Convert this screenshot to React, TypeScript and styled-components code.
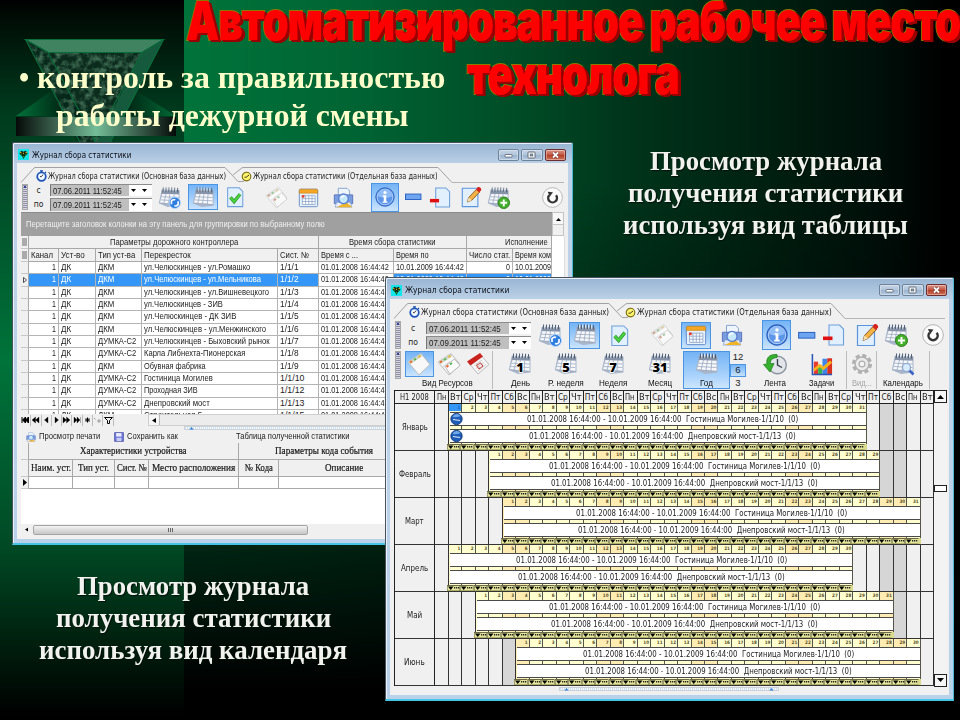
import React, { useLayoutEffect, useRef, useState } from "react";
import styled, { createGlobalStyle, css } from "styled-components";

const Global = createGlobalStyle`
  * { box-sizing: border-box; }
  body { margin: 0; background: #000; overflow: hidden; }
  svg { display: block; flex: none; overflow: visible; }
`;

const sans = '"Liberation Sans", Arial, sans-serif';
const tahoma = '"DejaVu Sans Condensed", "DejaVu Sans", sans-serif';
const serif = '"Liberation Serif", "Times New Roman", serif';

/* ---------- text fitted to a given width ---------- */

const FitBox = styled.span<{ $w: number; $ml: number }>`
  display: inline-block;
  flex: none;
  width: ${(p) => p.$w}px;
  margin-left: ${(p) => p.$ml}px;
  white-space: pre;
`;
const FitInner = styled.span`
  display: inline-block;
  transform-origin: 0 50%;
`;

function Fit({ w, ml = 0, children }: { w: number; ml?: number; children: React.ReactNode }) {
  const ref = useRef<HTMLSpanElement>(null);
  const [k, setK] = useState(1);
  useLayoutEffect(() => {
    if (ref.current) setK(w / ref.current.offsetWidth);
  }, [w, children]);
  return (
    <FitBox $w={w} $ml={ml}>
      <FitInner ref={ref} style={{ transform: `scaleX(${k})` }}>
        {children}
      </FitInner>
    </FitBox>
  );
}

/* ---------- slide ---------- */

const Slide = styled.main`
  position: relative;
  width: 960px;
  height: 720px;
  overflow: hidden;
  display: grid;
  grid-template-columns: 184px 1fr;
`;
const LeftBand = styled.div`
  background: linear-gradient(#000 0, #000a04 14px, #003a1d 110px, #00733a 360px, #004a25 545px, #001c0c 650px, #000 715px);
`;
const RightBand = styled.div`
  background:
    linear-gradient(transparent 180px, rgba(0, 0, 0, 0.68) 545px, #000 690px),
    linear-gradient(90deg, #00733a 0, #006634 150px, #004d27 330px, #00351b 440px, #001f10 590px, #00100a 690px, #000 760px);
`;
const Placed = styled.div<{ $x: number; $y: number }>`
  position: absolute;
  left: ${(p) => p.$x}px;
  top: ${(p) => p.$y}px;
`;
const Headline = styled(Placed)`
  margin: 0;
  font: 900 54px/54px Inter, Roboto, sans-serif;
  letter-spacing: -1.5px;
  color: #f00;
  -webkit-text-stroke: 2px #8b7a00;
  paint-order: stroke fill;
  text-shadow: 2px 1px 0 #990000, 3px 2px 0 #990000, 4px 2px 0 #990000;
`;
const HeadLine = styled.div<{ $ml?: number }>`
  height: 54px;
  padding-left: ${(p) => p.$ml || 0}px;
`;
const Bullet = styled(Placed)`
  font: bold 32px/38px ${serif};
  color: #ffffcc;
`;
const BulletLine = styled.div<{ $ml: number }>`
  height: 38px;
  padding-left: ${(p) => p.$ml}px;
`;
const Caption = styled(Placed)`
  display: flex;
  flex-direction: column;
  align-items: center;
  font: bold 27px/32px ${serif};
  color: #f2f2ee;
  text-shadow: 1px 1px 1px #00130a;
`;

function Emblem() {
  return (
    <svg width="184" height="150" viewBox="0 0 184 150">
      <defs>
        <linearGradient id="bar">
          <stop offset="0" stopColor="#050a08" />
          <stop offset=".5" stopColor="#74bd98" />
          <stop offset="1" stopColor="#050a08" />
        </linearGradient>
        <linearGradient id="wingL">
          <stop offset="0" stopColor="#00733a" />
          <stop offset="1" stopColor="#001a0e" />
        </linearGradient>
        <linearGradient id="wingR">
          <stop offset="0" stopColor="#001a0e" />
          <stop offset="1" stopColor="#006a36" />
        </linearGradient>
        <filter id="marble" x="0" y="0" width="1" height="1" colorInterpolationFilters="sRGB">
          <feTurbulence type="fractalNoise" baseFrequency=".16" numOctaves="5" seed="11" />
          <feColorMatrix values="0 0 0 0 .28  0 0 0 0 .46  0 0 0 0 .36  2.2 0 0 0 -.85" />
          <feComposite in2="SourceGraphic" operator="in" result="n" />
          <feMerge>
            <feMergeNode in="SourceGraphic" />
            <feMergeNode in="n" />
          </feMerge>
        </filter>
      </defs>
      <path d="M16 116L50 92 70 116z" fill="url(#wingL)" />
      <path d="M176 116L138 92 118 116z" fill="url(#wingR)" />
      <g filter="url(#marble)">
        <path d="M25 39L48 52 97 142 97 150 82 150z" fill="#06281a" />
        <path d="M48 52H142L97 146z" fill="#0b2c1d" />
      </g>
      <path d="M164 39L142 52 97 142V150h10z" fill="#155a3c" />
      <path d="M25 39H164L142 52H48z" fill="#3f8360" />
      <path d="M25.500 39.500H163.500L142 52.500H48zL84 150M163.500 39.500L106 150M48 52.500L100 150M142 52.500L94 142" fill="none" stroke="#0a6b3b" strokeWidth="1.200" />
      <rect x="16" y="117" width="160" height="19" fill="url(#bar)" />
    </svg>
  );
}

/* ---------- window chrome ---------- */

const Frame = styled.section<{ $x: number; $y: number; $w: number; $h: number; $top: number }>`
  position: absolute;
  left: ${(p) => p.$x}px;
  top: ${(p) => p.$y}px;
  width: ${(p) => p.$w}px;
  height: ${(p) => p.$h}px;
  display: flex;
  flex-direction: column;
  border: 1px solid #47525c;
  border-right-color: #4bb9d6;
  border-bottom: 2px solid #45c4e6;
  border-radius: 2px 2px 0 0;
  box-shadow: inset 1px 1px 0 #e9f2fa;
  padding: 0 4px 4px 4px;
  background: linear-gradient(#98b4d2 0, #bdd2e8 ${(p) => p.$top}px, #b9d1ea 100%);
`;
const TitleBar = styled.header<{ $h: number }>`
  height: ${(p) => p.$h}px;
  flex: none;
  display: flex;
  align-items: center;
  font: 8.600px/12px ${tahoma};
  color: #0a0f18;
  padding: 3px 2px 0 1px;
`;
const Spacer = styled.div`
  flex: 1;
`;
const WinButton = styled.div<{ $close?: boolean }>`
  width: 21.500px;
  height: 12px;
  margin-left: 2px;
  border: 1px solid ${(p) => (p.$close ? "#6e2c2c" : "#6d829b")};
  border-radius: 2px;
  box-shadow: inset 0 0 0 1px rgba(255, 255, 255, 0.35);
  background: ${(p) =>
    p.$close
      ? "linear-gradient(#d99a8c, #c4513c 50%, #b03c26 50%, #cf7358)"
      : "linear-gradient(#c3d3e5, #b2c5db 50%, #9cb3cd 50%, #b3c9e0)"};
  display: flex;
  align-items: center;
  justify-content: center;
`;
const Client = styled.div`
  flex: 1;
  min-height: 0;
  background: #f0f0f0;
  display: flex;
  flex-direction: column;
  overflow: hidden;
  font: 8.800px/11px ${sans};
  color: #1c1c1c;
`;

function AppGlyph() {
  return (
    <svg width="11" height="11" viewBox="0 0 12 12">
      <rect width="12" height="12" fill="#12e6ea" />
      <path d="M1.500 4.500l2-2.500 2.500 1 2.500-1 2 2.500-1.500 2-1.500 1.500L6 11 4.500 8 3 6.500z" fill="#101c14" />
      <path d="M2.500 3.500l1.200 1M9.500 3.500l-1.200 1M5.500 4.500l1 .5" stroke="#e8d21a" strokeWidth="1.300" />
      <path d="M5.500 7.500l1 1.500M3.500 6l1 .5M8.500 6l-1 .5" stroke="#17a832" strokeWidth="1.500" />
    </svg>
  );
}
const WinGlyph = ({ kind }: { kind: "min" | "max" | "close" }) => (
  <svg width="9" height="8" viewBox="0 0 9 8">
    {kind === "min" && <rect x="1" y="3.500" width="7" height="2.600" rx=".5" fill="#fff" stroke="#55606e" strokeWidth=".8" />}
    {kind === "max" && (
      <>
        <rect x="1" y="1" width="7" height="6" rx=".6" fill="#fff" stroke="#55606e" strokeWidth=".9" />
        <rect x="3.200" y="3" width="2.600" height="2" fill="#8fa6c0" stroke="#55606e" strokeWidth=".7" />
      </>
    )}
    {kind === "close" && (
      <>
        <path d="M2 1.500l5 5M7 1.500l-5 5" stroke="#5c2a2a" strokeWidth="3" />
        <path d="M2 1.500l5 5M7 1.500l-5 5" stroke="#fff" strokeWidth="1.800" />
      </>
    )}
  </svg>
);

function WindowTitle({ h, w }: { h: number; w: number }) {
  return (
    <TitleBar $h={h}>
      <AppGlyph />
      <Fit w={w} ml={3}>Журнал сбора статистики</Fit>
      <Spacer />
      <WinButton><WinGlyph kind="min" /></WinButton>
      <WinButton><WinGlyph kind="max" /></WinButton>
      <WinButton $close><WinGlyph kind="close" /></WinButton>
    </TitleBar>
  );
}

/* ---------- tabs ---------- */

const Tabs = styled.nav`
  height: 20px;
  flex: none;
  padding-top: 4px;
  display: flex;
`;
const TabBody = styled.div<{ $w: number; $in: number }>`
  width: ${(p) => p.$w}px;
  height: 16px;
  border-top: 1px solid #a2a2a2;
  display: flex;
  align-items: center;
  font: 8.600px/12px ${tahoma};
  padding-left: ${(p) => p.$in}px;
`;
const TabRest = styled.div`
  flex: 1;
  border-bottom: 1px solid #b5b5b5;
  margin-right: 4px;
`;
const Pull = styled.div`
  margin-left: -3px;
  display: flex;
`;
const Slope = ({ w, d }: { w: number; d: string }) => (
  <svg width={w} height="16" viewBox={`0 0 ${w} 16`}>
    <path d={d} fill="none" stroke="#a2a2a2" />
  </svg>
);
const Clock = ({ blue }: { blue?: boolean }) => (
  <svg width="11" height="12" viewBox="0 0 11 12">
    {blue && <path d="M4 .8h3M5.500 1v2M9 2l1 1" stroke="#1d4fa6" strokeWidth="1.200" />}
    <circle cx="5.500" cy="6.600" r="4.300" fill={blue ? "#f3f8ff" : "#fff36b"} stroke={blue ? "#1b54b8" : "#756a12"} strokeWidth={blue ? 1.700 : 1.100} />
    <path d={blue ? "M5.500 6.600l1.500-2M5.500 6.600H4" : "M8 5L5.500 7 3.500 7.300"} stroke="#222" fill="none" strokeWidth=".9" />
  </svg>
);

function TabStrip({ t1, t2, b1, b2 }: { t1: number; t2: number; b1: number; b2: number }) {
  return (
    <Tabs>
      <Slope w={18} d="M4 15.500L17 1 18 .5" />
      <TabBody $w={b1} $in={1}>
        <Clock blue />
        <Fit w={t1} ml={1}>Журнал сбора статистики (Основная база данных)</Fit>
      </TabBody>
      <Slope w={13} d="M0 .5L13 14.500H19" />
      <Slope w={6} d="M-5 8L4 .8 6 .5" />
      <TabBody $w={b2} $in={0}>
        <Pull><Clock /></Pull>
        <Fit w={t2} ml={1}>Журнал сбора статистики (Отдельная база данных)</Fit>
      </TabBody>
      <Slope w={14} d="M0 .5L14 15.500" />
      <TabRest />
    </Tabs>
  );
}

/* ---------- icons ---------- */

type IconName =
  | "calRefresh" | "cal" | "calPlus" | "calFind" | "check" | "cards" | "sheet" | "print" | "info"
  | "minus" | "docMinus" | "edit" | "reload" | "blank" | "red" | "tape" | "tasks" | "gear"
  | "n1" | "n5" | "n7" | "n31" | "save" | "printSmall";

const NumberMark = styled.text`
  font: 900 13px "Open Sans", ${tahoma};
`;

function CalBase() {
  return (
    <>
      <path d="M4 3.500L22.500 4.500 22.500 20.500 10 22 .8 18z" fill="#a9b5c8" />
      <path d="M4.500 8L21.500 8.500V19L2 17.500z" fill="#f6f8fc" />
      <path d="M4 4L22 4.500V8.500L3.600 8z" fill="#8693a8" />
      <path d="M3.600 11.200l18 .8M2.800 14.500l18.500 1M8.500 8L6 18M12.500 8l-1.500 10.500M16.800 8.500L16 19M2 17.800l19.500 1.600" stroke="#9aa8be" strokeWidth=".8" fill="none" />
      <path d="M5.500 1.500v4.500M8.500 1.500v4.500M11.500 1.500v4.500M14.500 1.500v4.500M17.500 1.800v4.500M20.500 2v4.500" stroke="#566275" strokeWidth="1" />
      <path d="M6.500 1.500v4M9.500 1.500v4M12.500 1.500v4M15.500 1.500v4M18.500 1.800v4" stroke="#dfe6ef" strokeWidth=".9" />
    </>
  );
}
const Page = () => <path d="M4 2h12.500l4 4v16.500H4z" fill="#e2effd" stroke="#6d9fdc" strokeWidth="1.100" />;

function Icon({ name, size = 24 }: { name: IconName; size?: number }) {
  const num = { n1: "1", n5: "5", n7: "7", n31: "31" }[name as "n1"];
  return (
    <svg width={size} height={size} viewBox="0 0 24 24">
      {(name.startsWith("cal") || num) && <CalBase />}
      {num && (
        <NumberMark x="12" y="20" textAnchor="middle" stroke="#fff" strokeWidth="1.500" paintOrder="stroke">
          {num}
        </NumberMark>
      )}
      {name === "calRefresh" && (
        <>
          <circle cx="17.500" cy="17.500" r="6" fill="#2f7fe0" stroke="#bcd9fa" />
          <path d="M14 19v-3.500c2-2 4-1 4-1M21 16v3.500c-2 2-4 1-4 1" stroke="#fff" strokeWidth="1.700" fill="none" />
        </>
      )}
      {name === "calPlus" && (
        <>
          <circle cx="17.500" cy="17.500" r="6" fill="#45b02c" stroke="#2c7d1b" />
          <path d="M17.500 14v7M14 17.500h7" stroke="#fff" strokeWidth="2" />
        </>
      )}
      {name === "calFind" && (
        <>
          <path d="M18 18l4.500 4.500" stroke="#3d63c9" strokeWidth="2.600" />
          <circle cx="15.500" cy="15.500" r="4" fill="#d7ecff" stroke="#8ca4cc" strokeWidth="1.200" />
        </>
      )}
      {name === "check" && (
        <>
          <Page />
          <path d="M7 12.500l4 4.500 6.500-8" stroke="#1e8f25" strokeWidth="3.600" fill="none" />
          <path d="M7 12.500l4 4.500 6.500-8" stroke="#4ed33e" strokeWidth="2.200" fill="none" />
        </>
      )}
      {name === "docMinus" && (
        <>
          <path d="M7 2h10.500l4 4v16H7z" fill="#e2effd" stroke="#6d9fdc" strokeWidth="1.100" />
          <rect x="1" y="13.500" width="9.500" height="3.600" fill="#e01010" />
        </>
      )}
      {name === "edit" && (
        <>
          <path d="M2.500 2.500h17v20h-17z" fill="#e2effd" stroke="#5b95e0" strokeWidth="1.200" />
          <path d="M8 17.500l1.500-5L18 3.500l3.500 3L13 15.500z" fill="#f3b245" stroke="#80501a" strokeWidth=".9" />
          <path d="M8 17.500l1.500-5 3.500 3z" fill="#f6dfb2" />
          <path d="M17.500 4l3.500 3 2-2.500c1-2-2.500-4.500-4-3z" fill="#d8231c" />
        </>
      )}
      {(name === "cards" || name === "blank") && (
        <>
          <path d="M1 10L14 1.500l9 11L12 23z" fill="#f8f8f8" stroke="#b5b5b5" strokeWidth=".9" />
          <path d="M1 10L14 1.500l1.800 2.200L3 12.500z" fill="#cfd6c8" />
          <path d="M3 10.500l2-1.300" stroke="#ed6a2e" strokeWidth="2" />
          <path d="M7 8l2-1.300" stroke="#5bb85b" strokeWidth="2" />
          <path d="M11.500 5.200l2-1.300" stroke="#e8b83a" strokeWidth="2" />
        </>
      )}
      {name === "cards" && (
        <>
          <path d="M8 14.500L17.500 7l5.500 6.500L13 22z" fill="#fdfdfd" stroke="#b0b0b0" strokeWidth=".9" />
          <path d="M9.500 15l2-1.500" stroke="#ed6a2e" strokeWidth="2" />
          <path d="M13 12.500l2-1.500" stroke="#5bb85b" strokeWidth="2" />
          <path d="M6 15l7-5.500" stroke="#ccc" />
        </>
      )}
      {name === "red" && (
        <>
          <path d="M2 10L14 2l9 10.500L12 22z" fill="#f6f6f6" stroke="#b5b5b5" strokeWidth=".9" />
          <path d="M1 9.500L14 1l3 3.500L4.500 13.500z" fill="#c9231c" />
          <path d="M8 14l8-6M10 16.500l8-6M12 19l8-6.500M10 11l4.500 6M13 9l4.500 6" stroke="#c4c4c4" strokeWidth=".8" />
          <path d="M10.500 13.500l4-2.500 2.500 3-4 3z" fill="none" stroke="#c9231c" strokeWidth=".9" />
        </>
      )}
      {name === "sheet" && (
        <>
          <rect x="1.500" y="2.500" width="21" height="20" rx="1.500" fill="#e7f1fc" stroke="#5f88c4" />
          <path d="M1.500 7V4q0-1.500 1.500-1.500h18q1.500 0 1.500 1.500v3z" fill="#f5a623" stroke="#c07d18" strokeWidth=".6" />
          <path d="M5 10h14.500v10H5zM5 13.300h14.500M5 16.600h14.500M8.700 10v10M12.300 10v10M16 10v10" fill="#fff" stroke="#8ba3c7" strokeWidth=".9" />
          <rect x="4.300" y="9.300" width="3" height="2.800" fill="#e63a2a" />
        </>
      )}
      {(name === "print" || name === "printSmall") && (
        <>
          <path d="M6 1.500h10l3 3V10H6z" fill="#eef5fd" stroke="#7d9cc9" />
          <path d="M1.500 9h21v10h-21z" fill="#7a9ce0" stroke="#5470b8" />
          <path d="M4 17.500h16l1.500 5.500h-19z" fill="#e8eefc" stroke="#7d9cc9" strokeWidth=".8" />
          <path d="M16 18l6 5h-18l6-3z" fill="#f0b428" />
          <circle cx="12" cy="13.500" r="5.500" fill="#c5e8fb" stroke="#5c7fd0" strokeWidth="1.500" />
          <path d="M9 12.500q1.500-2.500 4-2" stroke="#fff" strokeWidth="1.500" fill="none" />
        </>
      )}
      {name === "info" && (
        <>
          <circle cx="12" cy="12" r="11" fill="#5d95e8" stroke="#2a5dbb" strokeWidth="1.200" />
          <circle cx="12" cy="12" r="9.400" fill="none" stroke="#b9d6fb" strokeWidth="1" />
          <path d="M3.500 11a8.500 8.500 0 0 1 17 0q-8 4-17 0z" fill="#8fbcf6" />
          <circle cx="12" cy="6.600" r="1.900" fill="#fff" />
          <path d="M9.300 10h4.200v7.300h1.500v1.700H9v-1.700h1.500v-5.600H9.300z" fill="#fff" />
        </>
      )}
      {name === "minus" && <rect x="3" y="8.500" width="18.500" height="6.500" fill="#6ea5f0" stroke="#2f64c4" strokeWidth="1.200" />}
      {name === "reload" && (
        <>
          <circle cx="12" cy="12" r="11.300" fill="#fafafa" stroke="#a8a8a8" strokeWidth=".9" />
          <path d="M8.200 9.500a5 5 0 1 0 7.800 0" fill="none" stroke="#333" strokeWidth="2.700" />
          <path d="M6.500 5.500l6 .6-3.600 5z" fill="#333" />
        </>
      )}
      {name === "tape" && (
        <>
          <circle cx="14.500" cy="13" r="8.800" fill="#e2e6ea" stroke="#8d959e" strokeWidth="1.400" />
          <path d="M14.500 7v6l4.500 2.500" stroke="#394049" strokeWidth="1.400" fill="none" />
          <path d="M14 2.500C6 2 3 6 4 12l-3.500.5L7 20l4-8.500-3.500.3C7 8 9 6 14 5.500z" fill="#36b02e" stroke="#1e7f1c" strokeWidth=".8" />
        </>
      )}
      {name === "tasks" && (
        <>
          <rect x="4" y="9" width="4.500" height="13" fill="#e83b2e" />
          <rect x="8.500" y="14" width="4.500" height="8" fill="#34b44a" />
          <rect x="13" y="6" width="5" height="16" fill="#3f86e8" />
          <rect x="18" y="5.500" width="5" height="16.500" fill="#d9301f" />
          <path d="M4 18l6-5 4 3 8-7" stroke="#f6b51e" strokeWidth="3" fill="none" />
          <path d="M2.500 1v21.500H23" stroke="#2a56b8" strokeWidth="1.600" fill="none" />
        </>
      )}
      {name === "gear" && (
        <>
          <circle cx="12" cy="12" r="9.300" fill="none" stroke="#b0b0b0" strokeWidth="3.400" strokeDasharray="4.400 2.900" />
          <circle cx="12" cy="12" r="7.600" fill="#ebebeb" stroke="#b0b0b0" strokeWidth="1.600" />
          <circle cx="12" cy="12" r="3.200" fill="#f4f4f4" stroke="#b0b0b0" strokeWidth="1.400" />
        </>
      )}
      {name === "save" && (
        <>
          <path d="M1.500 1.500h21v21h-21z" fill="#6f78dd" stroke="#3f479e" strokeWidth="1.800" />
          <rect x="5" y="2.500" width="13" height="8.500" fill="#e9ebfb" />
          <rect x="6" y="14" width="12" height="8" fill="#c9ccf2" />
        </>
      )}
    </svg>
  );
}

/* ---------- toolbars ---------- */

const Toolbar = styled.div<{ $h: number }>`
  height: ${(p) => p.$h}px;
  flex: none;
  display: flex;
  align-items: center;
`;
const Grip = styled.div<{ $ml: number; $h: number }>`
  width: 6px;
  height: ${(p) => p.$h}px;
  margin-left: ${(p) => p.$ml}px;
  flex: none;
  border: 1px solid #a9a9a9;
  background:
    linear-gradient(#343e96, #343e96) 1px 1px / 2px 2px no-repeat,
    repeating-linear-gradient(#8d90a8 0 1px, #d6d6dc 1px 2px);
`;
const Side = styled.div<{ $w: number }>`
  width: ${(p) => p.$w}px;
  height: 26px;
  flex: none;
  padding-right: 1px;
  display: flex;
  flex-direction: column;
  justify-content: space-between;
  align-items: center;
  font-family: ${tahoma};
  font-size: 8.500px;
  line-height: 12px;
`;
const Fields = styled.div<{ $w: number }>`
  width: ${(p) => p.$w}px;
  flex: none;
  display: flex;
  flex-direction: column;
  gap: 2px;
`;
const Field = styled.div<{ $g: number }>`
  height: 12.500px;
  display: flex;
  align-items: center;
  background: #fff;
  border-top: 1px solid #8c8c8c;
  font-size: 9.500px;
  & > span:first-child {
    width: ${(p) => p.$g}px;
    flex: none;
    height: 100%;
    background: #bfbfbf;
    border-left: 1px solid #777;
    padding-left: 2px;
    line-height: 11.500px;
  }
`;
const Arrows = styled.span`
  display: flex;
  gap: 6px;
  padding-left: 2px;
`;
const Down = () => (
  <svg width="5" height="3" viewBox="0 0 5 3"><path d="M0 0h5L2.500 3z" fill="#000" /></svg>
);

function Dates({ w, g, t }: { w: number; g: number; t: number }) {
  return (
    <Fields $w={w}>
      {["07.06.2011 11:52:45", "07.09.2011 11:52:45"].map((d) => (
        <Field key={d} $g={g}>
          <span><Fit w={t}>{d}</Fit></span>
          <Arrows><Down /><Down /></Arrows>
        </Field>
      ))}
    </Fields>
  );
}

const activeLook = css`
  background: linear-gradient(#72b2f5, #a5d0fb 60%, #cfe6fd);
  box-shadow: inset 0 0 0 1px #4b96e4;
`;
const ToolButton = styled.div<{ $ml: number; $w: number; $h: number; $on?: boolean }>`
  margin-left: ${(p) => p.$ml}px;
  width: ${(p) => p.$w}px;
  height: ${(p) => p.$h}px;
  flex: none;
  display: flex;
  align-items: center;
  justify-content: center;
  ${(p) => p.$on && activeLook}
`;
const Dim = styled.div<{ $dim?: boolean }>`
  opacity: ${(p) => (p.$dim ? 0.65 : 1)};
  filter: ${(p) => (p.$dim ? "saturate(.5) contrast(1.1)" : "none")};
`;

type Tool = { n: IconName; x: number; w: number; on?: boolean; h?: number; dim?: boolean; s?: number };

function Tools({ items, from, s }: { items: Tool[]; from: number; s: number }) {
  let edge = from;
  return (
    <>
      {items.map((it, i) => {
        const ml = it.x - edge;
        edge = it.x + it.w;
        return (
          <ToolButton key={i} $ml={ml} $w={it.w} $h={it.h || 26} $on={it.on}>
            <Dim $dim={it.dim}><Icon name={it.n} size={it.s || s} /></Dim>
          </ToolButton>
        );
      })}
    </>
  );
}

/* ---------- first window: tables ---------- */

const GroupPanel = styled.div`
  height: 24px;
  flex: none;
  margin: 1px 4px 0 4px;
  display: grid;
  grid-template-columns: 531px 12px;
  font-size: 8.800px;
`;
const GroupHint = styled.div`
  background: #a0a0a0;
  border-top: 1px solid #8b8b8b;
  color: #f0f0f0;
  display: flex;
  align-items: center;
  padding-left: 5px;
`;
const UpScroll = styled.div`
  border: 1px solid #c4c4c4;
  background: linear-gradient(#f8f8f8 11px, #c4c4c4 11px, #c4c4c4 12px, #f0f0f0 12px);
  padding: 5px 0 0 3px;
`;
const Grid = styled.div`
  margin-left: 4px;
  width: 544px;
  height: 178px;
  flex: none;
  background: #fff;
  overflow: hidden;
  border-right: 1px solid #ddd;
`;
const cols = "8px 30px 37px 46px 136px 41px 75px 73px 46px 39px";
const HeadRow = styled.div<{ $cols: string }>`
  display: grid;
  grid-template-columns: ${(p) => p.$cols};
  width: 531px;
  height: 13px;
  background: #f0f0f0;
`;
const HeadCell = styled.div<{ $center?: boolean }>`
  display: flex;
  align-items: center;
  justify-content: ${(p) => (p.$center ? "center" : "flex-start")};
  padding-left: ${(p) => (p.$center ? 0 : 2)}px;
  border-right: 1px solid #a8a8a8;
  border-bottom: 1px solid #a8a8a8;
  overflow: hidden;
`;
const Row = styled.div<{ $on?: boolean }>`
  display: grid;
  grid-template-columns: ${cols};
  width: 531px;
  height: 12.330px;
  background: ${(p) => (p.$on ? "#3497f8" : "#fff")};
  color: ${(p) => (p.$on ? "#fff" : "#1c1c1c")};
`;
const Cell = styled.div<{ $right?: boolean; $plain?: boolean }>`
  display: flex;
  align-items: center;
  justify-content: ${(p) => (p.$right ? "flex-end" : "flex-start")};
  padding: 0 2px;
  border-right: 1px solid #b4b4b4;
  border-bottom: 1px solid #b4b4b4;
  overflow: hidden;
  ${(p) => p.$plain && "background: #fff; color: #1c1c1c;"}
`;
const Marker = styled.div`
  background: #f0f0f0;
  border-right: 1px solid #a8a8a8;
  border-bottom: 1px solid #c8c8c8;
  display: flex;
  align-items: center;
  justify-content: center;
`;
const Handle = () => (
  <svg width="5" height="8" viewBox="0 0 5 8"><path d="M0 1h3M0 3h3M0 5h3M0 7h3M4 0v8" stroke="#555" strokeWidth=".9" /></svg>
);

const rows: [string, string, number, string][] = [
  ["ДКМ", "ул.Челюскинцев - ул.Ромашко", 106, "1/1/1"],
  ["ДКМ", "ул.Челюскинцев - ул.Мельникова", 117, "1/1/2"],
  ["ДКМ", "ул.Челюскинцев - ул.Вишневецкого", 125, "1/1/3"],
  ["ДКМ", "ул.Челюскинцев - ЗИВ", 79, "1/1/4"],
  ["ДКМ", "ул.Челюскинцев - ДК ЗИВ", 92, "1/1/5"],
  ["ДКМ", "ул.Челюскинцев - ул.Менжинского", 122, "1/1/6"],
  ["ДУМКА-С2", "ул.Челюскинцев - Быховский рынок", 126, "1/1/7"],
  ["ДУМКА-С2", "Карла Либнехта-Пионерская", 101, "1/1/8"],
  ["ДКМ", "Обувная фабрика", 62, "1/1/9"],
  ["ДУМКА-С2", "Гостиница Могилев", 69, "1/1/10"],
  ["ДУМКА-С2", "Проходная ЗИВ", 54, "1/1/12"],
  ["ДУМКА-С2", "Днепровский мост", 66, "1/1/13"],
  ["ДКМ", "Строительная 5", 58, "1/1/15"],
];

const NavRow = styled.div`
  height: 12px;
  flex: none;
  margin-left: 4px;
  display: flex;
  align-items: center;
  background: #f0f0f0;
`;
const NavCell = styled.div`
  width: 10.300px;
  height: 11px;
  border-right: 1px solid #bdbdbd;
  display: flex;
  align-items: center;
  justify-content: center;
`;
const HScroll = styled.div`
  flex: 1;
  margin-left: 34px;
  height: 12px;
  display: flex;
  align-items: center;
  padding-left: 3px;
  border: 1px solid #cfcfcf;
  background: linear-gradient(90deg, #f6f6f6 10px, #b8b8b8 10px, #b8b8b8 11px, #ececec 11px);
`;
const navPaths = [
  "M1 1v6M7.500 1v6L4.500 4zM4.500 1v6L1.500 4z",
  "M8 1v6L4.500 4zM4.500 1v6L1 4z",
  "M6 1v6L2.500 4z",
  "M3 1v6l3.500-3z",
  "M1 1v6l3.500-3zM4.500 1v6L8 4z",
  "M1 1v6l3-3zM4 1v6l3-3zM7.500 1v6",
  "M2 4h5M4.500 1.500v5M2.800 2.300l3.400 3.400M6.200 2.300L2.800 5.700",
  "M4 5h4M6 3v4M1 2l1.500 1.500",
  "M.5 1.500h8L5.500 4.500v3h-2v-3z",
];
const NavGlyph = ({ i }: { i: number }) => (
  <svg width="9" height="8" viewBox="0 0 9 8">
    <path d={navPaths[i]} fill={i === 8 ? "none" : "#000"} stroke={i === 7 ? "#999" : "#000"} strokeWidth={i > 5 || i === 0 ? 1 : 0.3} />
  </svg>
);
const Splitter = styled.div<{ $ml: number; $w: number }>`
  height: 4px;
  flex: none;
  margin-left: ${(p) => p.$ml}px;
  width: ${(p) => p.$w}px;
  border: 1px solid #ccd2d8;
  background: repeating-linear-gradient(90deg, #cfe1f4 0 1px, #f8fafc 1px 2px);
  display: flex;
  justify-content: space-between;
  padding: 0 4px;
`;
const BlueUp = () => (
  <svg width="5" height="2.500" viewBox="0 0 5 3"><path d="M0 3h5L2.500 0z" fill="#2f7fe0" /></svg>
);
const SubBar = styled.div`
  height: 13px;
  flex: none;
  display: flex;
  align-items: center;
  padding-left: 9px;
`;
const SaveSlot = styled.div`
  margin-left: 14px;
`;
const Detail = styled.div`
  flex: 1;
  margin-left: 4px;
  background: #fff;
  font: 9.800px/12px ${serif};
  -webkit-text-stroke: 0.2px #111;
`;
const DetailRow = styled.div<{ $h: number; $cols: string; $head?: boolean }>`
  display: grid;
  grid-template-columns: ${(p) => p.$cols};
  height: ${(p) => p.$h}px;
  background: ${(p) => (p.$head ? "#f0f0f0" : "#fff")};
`;
const BottomScroll = styled.div`
  height: 15px;
  flex: none;
  margin-left: 4px;
  display: flex;
  align-items: center;
  gap: 5px;
  padding: 0 0 4px 4px;
  background: #f0f0f0;
`;
const Thumb = styled.div`
  width: 275px;
  height: 10px;
  border: 1px solid #a5a5a5;
  border-radius: 2px;
  background: linear-gradient(#f4f4f4, #dcdcdc 50%, #c6c6c6);
  display: flex;
  align-items: center;
  justify-content: center;
`;
const LeftTri = ({ s = 4 }: { s?: number }) => (
  <svg width={s} height="5" viewBox="0 0 4 5"><path d="M4 0v5L0 2.500z" fill="#000" /></svg>
);

const tools1: Tool[] = [
  { n: "calRefresh", x: 157, w: 24 },
  { n: "cal", x: 188, w: 30, on: true },
  { n: "check", x: 223, w: 24, s: 22 },
  { n: "cards", x: 264, w: 24, dim: true },
  { n: "sheet", x: 296, w: 24, s: 21 },
  { n: "print", x: 331, w: 24, s: 21 },
  { n: "info", x: 371, w: 28, on: true, h: 29, s: 20 },
  { n: "minus", x: 402, w: 22, s: 20 },
  { n: "docMinus", x: 429, w: 22 },
  { n: "edit", x: 460, w: 22, s: 22 },
  { n: "calPlus", x: 486, w: 24 },
  { n: "reload", x: 541, w: 22, s: 21 },
];

function TableWindow() {
  return (
    <Frame $x={12} $y={142} $w={561} $h={403} $top={22}>
      <WindowTitle h={20} w={99} />
      <Client>
        <TabStrip b1={190} t1={178} b2={194} t2={185} />
        <Toolbar $h={28}>
          <Grip $ml={5} $h={26} />
          <Side $w={22}><span>с</span><span>по</span></Side>
          <Dates w={102} g={79} t={69} />
          <Tools items={tools1} from={152} s={23} />
        </Toolbar>
        <GroupPanel>
          <GroupHint><Fit w={299}>Перетащите заголовок колонки на эту панель для группировки по выбранному полю</Fit></GroupHint>
          <UpScroll>
            <svg width="5" height="3" viewBox="0 0 5 3"><path d="M0 3h5L2.500 0z" fill="#000" /></svg>
          </UpScroll>
        </GroupPanel>
        <Grid>
          <HeadRow $cols="8px 290px 148px 85px">
            <Marker><Handle /></Marker>
            <HeadCell $center><Fit w={128}>Параметры дорожного контроллера</Fit></HeadCell>
            <HeadCell $center><Fit w={87}>Время сбора статистики</Fit></HeadCell>
            <HeadCell><Fit w={43} ml={36}>Исполнение</Fit></HeadCell>
          </HeadRow>
          <HeadRow $cols={cols}>
            <Marker><Handle /></Marker>
            <HeadCell><Fit w={22}>Канал</Fit></HeadCell>
            <HeadCell><Fit w={24}>Уст-во</Fit></HeadCell>
            <HeadCell><Fit w={37}>Тип уст-ва</Fit></HeadCell>
            <HeadCell><Fit w={47}>Перекресток</Fit></HeadCell>
            <HeadCell><Fit w={29}>Сист. №</Fit></HeadCell>
            <HeadCell><Fit w={37}>Время с ...</Fit></HeadCell>
            <HeadCell><Fit w={33}>Время по</Fit></HeadCell>
            <HeadCell><Fit w={41}>Число стат.</Fit></HeadCell>
            <HeadCell><Fit w={36}>Время ком</Fit></HeadCell>
          </HeadRow>
          {rows.map(([type, name, w, num], i) => (
            <Row key={num} $on={i === 1}>
              <Marker>
                {i === 1 && (
                  <svg width="4" height="6" viewBox="0 0 4 6"><path d="M.5.5v5L3.500 3z" fill="#fff" stroke="#222" strokeWidth=".8" /></svg>
                )}
              </Marker>
              <Cell $right><Fit w={4}>1</Fit></Cell>
              <Cell><Fit w={10}>ДК</Fit></Cell>
              <Cell><Fit w={type === "ДКМ" ? 16 : 38}>{type}</Fit></Cell>
              <Cell><Fit w={w}>{name}</Fit></Cell>
              <Cell><Fit w={num.length === 5 ? 19 : 24}>{num}</Fit></Cell>
              <Cell $plain><Fit w={68}>01.01.2008 16:44:42</Fit></Cell>
              <Cell><Fit w={68}>10.01.2009 16:44:42</Fit></Cell>
              <Cell $right><Fit w={4}>0</Fit></Cell>
              <Cell><Fit w={36}>10.01.2009</Fit></Cell>
            </Row>
          ))}
        </Grid>
        <NavRow>
          {navPaths.map((_, i) => (
            <NavCell key={i}><NavGlyph i={i} /></NavCell>
          ))}
          <HScroll><LeftTri /></HScroll>
        </NavRow>
        <Splitter $ml={167} $w={218}><BlueUp /></Splitter>
        <SubBar>
          <Icon name="printSmall" size={10} />
          <Fit w={61} ml={3}>Просмотр печати</Fit>
          <SaveSlot><Icon name="save" size={10} /></SaveSlot>
          <Fit w={51} ml={3}>Сохранить как</Fit>
          <Fit w={113} ml={58}>Таблица полученной статистики</Fit>
        </SubBar>
        <Detail>
          <DetailRow $h={17} $head $cols="8px 210px 214px 110px">
            <Marker />
            <HeadCell $center><Fit w={107}>Характеристики устройства</Fit></HeadCell>
            <HeadCell><Fit w={98} ml={34}>Параметры кода события</Fit></HeadCell>
            <HeadCell />
          </DetailRow>
          <DetailRow $h={17} $head $cols="8px 44px 42px 34px 90px 40px 170px">
            <Marker />
            <HeadCell $center><Fit w={40}>Наим. уст.</Fit></HeadCell>
            <HeadCell $center><Fit w={31}>Тип уст.</Fit></HeadCell>
            <HeadCell $center><Fit w={30}>Сист. №</Fit></HeadCell>
            <HeadCell $center><Fit w={83}>Место расположения</Fit></HeadCell>
            <HeadCell $center><Fit w={28}>№ Кода</Fit></HeadCell>
            <HeadCell><Fit w={38} ml={44}>Описание</Fit></HeadCell>
          </DetailRow>
          <DetailRow $h={12} $cols="8px 44px 42px 34px 90px 40px 170px">
            <Marker>
              <svg width="4" height="7" viewBox="0 0 4 7"><path d="M0 0v7l4-3.500z" fill="#000" /></svg>
            </Marker>
            <HeadCell /><HeadCell /><HeadCell /><HeadCell /><HeadCell /><HeadCell />
          </DetailRow>
        </Detail>
        <BottomScroll>
          <LeftTri s={3} />
          <Thumb>
            <svg width="6" height="4" viewBox="0 0 6 4"><path d="M.5 0v4M2.500 0v4M4.500 0v4" stroke="#666" /></svg>
          </Thumb>
        </BottomScroll>
      </Client>
    </Frame>
  );
}

/* ---------- second window: calendar ---------- */

const tools2: Tool[] = [
  { n: "calRefresh", x: 538, w: 24 },
  { n: "cal", x: 569, w: 31, on: true, h: 27 },
  { n: "check", x: 607, w: 24, s: 23 },
  { n: "cards", x: 650, w: 24, dim: true },
  { n: "sheet", x: 681, w: 30, on: true, h: 27, s: 22 },
  { n: "print", x: 720, w: 24, s: 22 },
  { n: "info", x: 762, w: 29, on: true, h: 30, s: 22 },
  { n: "minus", x: 795, w: 22, s: 21 },
  { n: "docMinus", x: 822, w: 24 },
  { n: "edit", x: 855, w: 24 },
  { n: "calPlus", x: 883, w: 25 },
  { n: "reload", x: 922, w: 22, s: 22 },
];

const Ribbon = styled.div`
  height: 39px;
  flex: none;
  display: flex;
  align-items: flex-start;
  font: 8.700px/11px ${sans};
`;
const RibbonGroup = styled.div<{ $ml: number; $w: number; $on?: boolean; $line?: boolean; $dim?: boolean }>`
  margin-left: ${(p) => p.$ml}px;
  width: ${(p) => p.$w}px;
  height: 38px;
  flex: none;
  display: flex;
  flex-direction: column;
  align-items: center;
  justify-content: space-between;
  color: ${(p) => (p.$dim ? "#a5a5a5" : "#111")};
  ${(p) => p.$line && "border-right: 1px solid #bcbcbc;"}
  ${(p) => p.$on && activeLook}
`;
const IconLine = styled.div`
  height: 26px;
  display: flex;
  align-items: center;
`;
const Months = styled.div`
  width: 16px;
  height: 39px;
  display: flex;
  flex-direction: column;
  text-align: center;
  font: 9.500px/12px ${sans};
`;
const MonthOption = styled.div<{ $on?: boolean }>`
  height: 13px;
  ${(p) => p.$on && activeLook}
`;

const DAY = 13.49;
const Calendar = styled.div`
  display: grid;
  grid-template-columns: 540px 13px;
  margin-left: 4px;
  height: 296.500px;
  flex: none;
`;
const gridCols = `40.300px repeat(37, ${DAY}px)`;
const WeekRow = styled.div`
  display: grid;
  grid-template-columns: ${gridCols};
  height: 14px;
  border-top: 1px solid #222;
  border-left: 1px solid #222;
  font: 8.300px/12px ${tahoma};
`;
const WeekCell = styled.div`
  border-right: 1px solid #222;
  border-bottom: 1px solid #222;
  display: flex;
  align-items: center;
  justify-content: center;
`;
const Month = styled.div`
  display: grid;
  grid-template-columns: ${gridCols};
  grid-template-rows: 8px 14px 3px 14px 1px 6px;
  height: 47px;
  border-left: 1px solid #222;
  font: 8.500px/12px ${tahoma};
`;
const MonthName = styled.div`
  grid-area: 1 / 1 / -1 / 2;
  margin-bottom: -1px;
  border-right: 1px solid #222;
  border-bottom: 1px solid #333;
  display: flex;
  align-items: center;
  justify-content: center;
`;
const Day = styled.div<{ $c: number; $in: boolean; $we: boolean; $today?: boolean }>`
  grid-row: 1 / -1;
  grid-column: ${(p) => p.$c + 2};
  margin-bottom: -1px;
  border-right: 1px solid ${(p) => (p.$in ? "#55554a" : "#333")};
  border-bottom: 1px solid #333;
  padding: 1px 1px 0 0;
  text-align: right;
  font: bold 4.600px/6px ${tahoma};
  color: #5a502a;
  background: ${(p) => (p.$in ? (p.$we ? "#ffecb3" : "#ffffcf") : p.$we ? "#d6d6d6" : "#f0f0f0")};
  ${(p) => p.$today && "background: linear-gradient(#3497f8 7px, #ffffcf 7px); color: #1a62b8;"}
`;
const Event = styled.div<{ $c: number; $n: number; $r: number }>`
  grid-row: ${(p) => p.$r};
  grid-column: ${(p) => p.$c + 2} / span ${(p) => p.$n};
  margin: 0 1px 0 1px;
  background: #fff;
  border-top: 1px solid #4a4a4a;
  border-bottom: 1px solid #4a4a4a;
  display: flex;
  align-items: center;
  justify-content: center;
`;
const EventIcon = styled.div`
  margin-right: -13px;
  align-self: center;
  & + span { margin-left: auto; margin-right: auto; padding-left: 5px; }
`;
const Strip = styled.div<{ $c: number; $n: number }>`
  grid-row: 6;
  grid-column: ${(p) => p.$c + 2} / span ${(p) => p.$n};
  margin-left: -2px;
  display: flex;
  overflow: hidden;
  background: #d9d98c;
`;
const Notch = () => (
  <svg width={DAY} height="6" viewBox="0 0 13.490 6">
    <rect width="13.490" height="6" fill="#e4e49a" />
    <path d="M0 .5h13.500" stroke="#6a6a48" strokeWidth="1" />
    <path d="M0 5.700h13.500" stroke="#77773c" strokeWidth=".6" />
    <path d="M0 1v4.500" stroke="#333" strokeWidth=".8" />
    <path d="M1 1.500h5.500L3.700 5z" fill="#000" />
    <path d="M7 2.800h6" stroke="#222" strokeWidth="1.500" strokeDasharray="1.200 .7" />
  </svg>
);
const ScrollCol = styled.div`
  display: flex;
  flex-direction: column;
  align-items: stretch;
  background: #f3f3f3;
`;
const ScrollBtn = styled.div`
  height: 13px;
  border: 1px solid #222;
  background: #f6f6f6;
  display: flex;
  align-items: center;
  justify-content: center;
`;
const ScrollThumb = styled.div`
  height: 7px;
  margin: 82px 0 auto;
  border: 1px solid #222;
  background: #fff;
`;

const months: [string, number, number, number][] = [
  ["Январь", 26, 1, 31],
  ["Февраль", 32, 4, 29],
  ["Март", 19, 5, 31],
  ["Апрель", 27, 1, 30],
  ["Май", 15, 3, 31],
  ["Июнь", 21, 6, 30],
];
const week = ["Пн", "Вт", "Ср", "Чт", "Пт", "Сб", "Вс"];
const range = (n: number) => Array.from({ length: n }, (_, i) => i);

const Orb = () => (
  <EventIcon>
    <svg width="13" height="12" viewBox="0 0 13 12">
      <circle cx="6.500" cy="6" r="5.700" fill="#1d5cb8" stroke="#0d2f66" strokeWidth=".8" />
      <path d="M2.500 4a4.500 4.500 0 0 1 8-1q-4 2-8 1z" fill="#6fa8ea" />
      <path d="M3 6.500l4 .6 3 .3" stroke="#fff" strokeWidth=".9" fill="none" />
    </svg>
  </EventIcon>
);

function YearRibbon() {
  const big: [IconName, string, number, number, number][] = [
    ["n1", "День", 19, 508, 24],
    ["n5", "Р. неделя", 36, 548, 36],
    ["n7", "Неделя", 28, 599, 28],
    ["n31", "Месяц", 24, 648, 24],
  ];
  let edge = 493;
  return (
    <Ribbon>
      <Grip $ml={5} $h={28} />
      <RibbonGroup $ml={2} $w={90} $line>
        <IconLine>
          <ToolButton $ml={0} $w={29} $h={26} $on><Icon name="blank" size={24} /></ToolButton>
          <ToolButton $ml={2} $w={26} $h={26}><Icon name="cards" size={24} /></ToolButton>
          <ToolButton $ml={3} $w={26} $h={26}><Icon name="red" size={24} /></ToolButton>
        </IconLine>
        <Fit w={51}>Вид Ресурсов</Fit>
      </RibbonGroup>
      {big.map(([n, label, lw, x, w]) => {
        const ml = x - edge;
        edge = x + w;
        return (
          <RibbonGroup key={n} $ml={ml} $w={w}>
            <IconLine><Icon name={n} size={24} /></IconLine>
            <Fit w={lw}>{label}</Fit>
          </RibbonGroup>
        );
      })}
      <RibbonGroup $ml={11} $w={47} $on>
        <IconLine><Icon name="cal" size={24} /></IconLine>
        <Fit w={13}>Год</Fit>
      </RibbonGroup>
      <Months>
        <MonthOption>12</MonthOption>
        <MonthOption $on>6</MonthOption>
        <MonthOption>3</MonthOption>
      </Months>
      <RibbonGroup $ml={17} $w={24}>
        <IconLine><Icon name="tape" size={24} /></IconLine>
        <Fit w={22}>Лента</Fit>
      </RibbonGroup>
      <RibbonGroup $ml={22} $w={25}>
        <IconLine><Icon name="tasks" size={23} /></IconLine>
        <Fit w={25}>Задачи</Fit>
      </RibbonGroup>
      <RibbonGroup $ml={12} $w={1} $line />
      <RibbonGroup $ml={0} $w={30} $line $dim>
        <IconLine><Icon name="gear" size={22} /></IconLine>
        <Fit w={20}>Вид...</Fit>
      </RibbonGroup>
      <RibbonGroup $ml={0} $w={53} $line>
        <IconLine><Icon name="calFind" size={24} /></IconLine>
        <Fit w={40}>Календарь</Fit>
      </RibbonGroup>
    </Ribbon>
  );
}

function CalendarWindow() {
  return (
    <Frame $x={385} $y={277} $w={569} $h={424} $top={22}>
      <WindowTitle h={21} w={104} />
      <Client>
        <TabStrip b1={201} t1={188} b2={203} t2={195} />
        <Toolbar $h={32}>
          <Grip $ml={5} $h={28} />
          <Side $w={25}><span>с</span><span>по</span></Side>
          <Dates w={105} g={83} t={72} />
          <Tools items={tools2} from={531} s={24} />
        </Toolbar>
        <YearRibbon />
        <Calendar>
          <div>
            <WeekRow>
              <WeekCell><Fit w={29}>H1 2008</Fit></WeekCell>
              {range(37).map((c) => (
                <WeekCell key={c}><Fit w={10}>{week[c % 7]}</Fit></WeekCell>
              ))}
            </WeekRow>
            {months.map(([name, nw, start, count], m) => (
              <Month key={name}>
                <MonthName><Fit w={nw}>{name}</Fit></MonthName>
                {range(37).map((c) => {
                  const inside = c >= start && c < start + count;
                  return (
                    <Day key={c} $c={c} $in={inside} $we={c % 7 > 4} $today={m === 0 && c === 1}>
                      {inside ? c - start + 1 : ""}
                    </Day>
                  );
                })}
                <Event $c={start} $n={count} $r={2}>
                  {m === 0 && <Orb />}
                  <Fit w={271}>{"01.01.2008 16:44:00 - 10.01.2009 16:44:00  Гостиница Могилев-1/1/10  (0)"}</Fit>
                </Event>
                <Event $c={start} $n={count} $r={4}>
                  {m === 0 && <Orb />}
                  <Fit w={267}>{"01.01.2008 16:44:00 - 10.01.2009 16:44:00  Днепровский мост-1/1/13  (0)"}</Fit>
                </Event>
                <Strip $c={start} $n={count}>
                  {range(count).map((d) => <Notch key={d} />)}
                </Strip>
              </Month>
            ))}
          </div>
          <ScrollCol>
            <ScrollBtn>
              <svg width="7" height="4" viewBox="0 0 7 4"><path d="M0 4h7L3.500 0z" fill="#000" /></svg>
            </ScrollBtn>
            <ScrollThumb />
            <ScrollBtn>
              <svg width="7" height="4" viewBox="0 0 7 4"><path d="M0 0h7L3.500 4z" fill="#000" /></svg>
            </ScrollBtn>
          </ScrollCol>
        </Calendar>
        <Splitter $ml={169} $w={220}><BlueUp /><BlueUp /></Splitter>
      </Client>
    </Frame>
  );
}

export default function App() {
  return (
    <Slide>
      <Global />
      <LeftBand><Emblem /></LeftBand>
      <RightBand />
      <Headline $x={186} $y={-6} as="h1">
        <HeadLine><Fit w={774}>Автоматизированное рабочее место</Fit></HeadLine>
        <HeadLine $ml={281}><Fit w={212}>технолога</Fit></HeadLine>
      </Headline>
      <Bullet $x={19} $y={58}>
        <BulletLine $ml={0}><Fit w={10}>•</Fit><Fit w={408} ml={8}>контроль за правильностью</Fit></BulletLine>
        <BulletLine $ml={37}><Fit w={353}>работы дежурной смены</Fit></BulletLine>
      </Bullet>
      <Caption $x={623} $y={145}>
        <Fit w={232}>Просмотр журнала</Fit>
        <Fit w={275}>получения статистики</Fit>
        <Fit w={285}>используя вид таблицы</Fit>
      </Caption>
      <Caption $x={39} $y={570}>
        <Fit w={232}>Просмотр журнала</Fit>
        <Fit w={275}>получения статистики</Fit>
        <Fit w={308}>используя вид календаря</Fit>
      </Caption>
      <TableWindow />
      <CalendarWindow />
    </Slide>
  );
}
